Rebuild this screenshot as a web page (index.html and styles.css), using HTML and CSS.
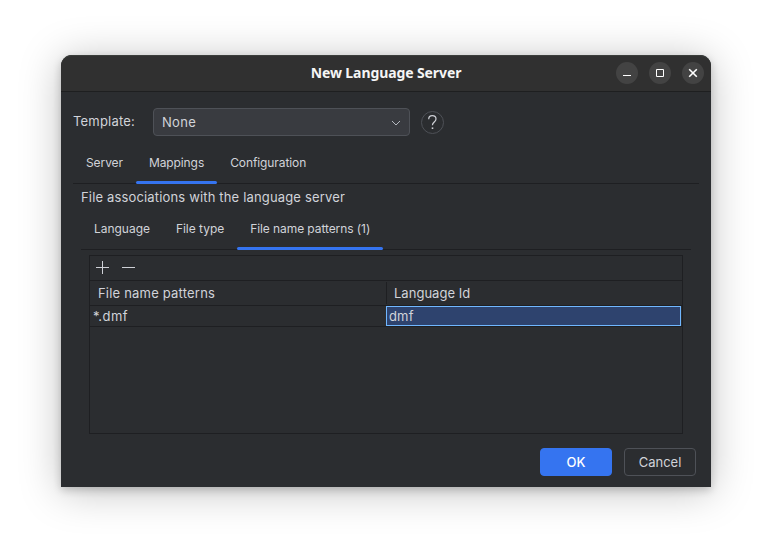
FILE: index.html
```html
<!DOCTYPE html>
<html lang="en">
<head>
<meta charset="utf-8">
<title>New Language Server</title>
<link rel="stylesheet" href="styles.css">
</head>
<body>
<div class="window">
  <header class="titlebar">
    <h1 class="title">New Language Server</h1>
    <div class="controls">
      <svg width="22" height="22" viewBox="0 0 22 22"><circle cx="11" cy="11" r="11"/><path d="M7 13.5h8"/></svg>
      <svg width="22" height="22" viewBox="0 0 22 22"><circle cx="11" cy="11" r="11"/><path d="M7.5 7.5h7v7h-7z"/></svg>
      <svg width="22" height="22" viewBox="0 0 22 22"><circle cx="11" cy="11" r="11"/><path class="close" d="M7.2 7.2l7.6 7.6M14.8 7.2l-7.6 7.6"/></svg>
    </div>
  </header>
  <main class="content">
    <div class="template-row">
      <label class="label"><span class="t-template">Template:</span></label>
      <div class="combo"><span class="t-none">None</span>
        <svg width="16" height="16" viewBox="0 0 16 16"><path d="M4 6l4 4 4-4"/></svg>
      </div>
      <svg class="help" width="23" height="23" viewBox="0 0 23 23"><circle cx="11.5" cy="11.5" r="11"/><path d="M7.7 8.2C7.7 5.9 9.2 4.6 11.3 4.6s3.7 1.3 3.7 3.4c0 2.9-3.6 3.1-3.6 6.2"/><path class="dot" d="M10.7 16.4h1.6v1.6h-1.6z"/></svg>
    </div>
    <nav class="tabs outer">
      <div class="tab"><span class="t-server">Server</span></div>
      <div class="tab active"><span class="t-mappings">Mappings</span></div>
      <div class="tab"><span class="t-config">Configuration</span></div>
    </nav>
    <section class="mappings">
      <p class="caption"><span class="t-caption">File associations with the language server</span></p>
      <nav class="tabs inner">
        <div class="tab"><span class="t-lang">Language</span></div>
        <div class="tab"><span class="t-type">File type</span></div>
        <div class="tab active"><span class="t-patterns">File name patterns (1)</span></div>
      </nav>
      <div class="panel">
        <div class="toolbar">
          <svg width="14" height="14" viewBox="0 0 14 14"><path d="M0 6.5h13M6.5 0v13"/></svg>
          <svg width="14" height="14" viewBox="0 0 14 14"><path d="M0 6.5h13"/></svg>
        </div>
        <div class="row head">
          <div class="cell"><span class="t-hpat">File name patterns</span></div>
          <div class="cell second"><span class="t-hid">Language Id</span></div>
        </div>
        <div class="row data">
          <div class="cell"><span class="t-star">*.dmf</span></div>
          <div class="cell selected"><span class="t-dmf">dmf</span></div>
        </div>
      </div>
    </section>
    <footer class="actions">
      <button class="button primary"><span class="t-ok">OK</span></button>
      <button class="button"><span class="t-cancel">Cancel</span></button>
    </footer>
  </main>
</div>
</body>
</html>
```
FILE: styles.css
```css
* { box-sizing: border-box; }
body {
  margin: 0;
  width: 772px;
  height: 554px;
  padding: 55px 61px 67px;
  overflow: hidden;
  background: #fff;
  font: 13px/16px Inter, "Liberation Sans", sans-serif;
  letter-spacing: .16px;
  color: #d1d3d9;
}
svg { display: block; flex: none; fill: none; }
span { white-space: nowrap; }
.window {
  width: 650px;
  height: 432px;
  border-radius: 11px 11px 0 0;
  background: #2b2d30;
  box-shadow: 0 3px 9px rgba(0, 0, 0, .2), 0 4px 42px rgba(0, 0, 0, .25);
}
.titlebar {
  display: grid;
  grid-template-columns: 1fr auto 1fr;
  align-items: center;
  height: 37px;
  padding-bottom: 1px;
  border-top: 1px solid #3b3e3b;
  border-bottom: 1px solid #1e1f20;
  border-radius: 11px 11px 0 0;
  background: #303030;
}
.title {
  grid-column: 2;
  margin: 0;
  font: bold 14px/20px "Noto Sans", sans-serif;
  letter-spacing: -.1px;
  color: #f5f5f5;
}
.controls { display: flex; justify-content: flex-end; gap: 11px; padding-right: 7px; }
.controls circle { fill: #434343; }
.controls path { stroke: #fff; }
.controls .close { stroke-width: 1.6; }
.content { padding: 16px 12px 0; }
.template-row { display: flex; height: 28px; }
.label { width: 80px; padding-top: 5px; }
.combo {
  display: flex;
  align-items: center;
  justify-content: space-between;
  width: 257px;
  padding: 0 5px 0 8px;
  border: 1px solid #4e5157;
  border-radius: 4px;
  background: #393b40;
}
.combo svg { margin-top: 2px; }
.combo path { stroke: #b4b8bf; }
.t-none { letter-spacing: .3px; }
.help { margin: 3px 0 0 11px; }
.help circle { stroke: #4e5157; }
.help path { stroke: #ced0d6; stroke-width: 1.2; }
.help .dot { fill: #ced0d6; stroke: none; }
.tabs { display: flex; font-size: 12px; letter-spacing: -.03px; border-bottom: 1px solid #1e1f22; }
.tab { display: flex; justify-content: center; margin-bottom: -1px; }
.active { position: relative; }
.active::after {
  content: "";
  position: absolute;
  inset: auto 0 0;
  height: 3px;
  border-radius: 1.5px;
  background: #3574f0;
}
.outer { height: 48px; letter-spacing: -.09px; }
.outer .tab { padding: 19px 13px 0; height: 48px; }
.mappings { padding: 0 8px; }
.caption { margin: 0; padding-top: 5px; height: 24px; }
.inner { height: 42px; margin-bottom: 5px; }
.inner .tab { padding: 13px 13px 0; height: 42px; }
.t-patterns { letter-spacing: -.08px; }
.panel { width: 594px; height: 179px; margin-left: 8px; border: 1px solid #1e1f22; }
.toolbar { display: flex; gap: 12px; height: 25px; padding: 5px 6px; border-bottom: 1px solid #1e1f22; }
.toolbar path { stroke: #ced0d6; }
.row { display: grid; grid-template-columns: 296px 295px; border-bottom: 1px solid #1e1f22; }
.head { height: 25px; }
.head .cell { padding: 4px 8px 0; }
.head .second { margin: 1px 0; padding: 3px 7px 0; border-left: 1px solid #1e1f22; }
.t-template, .t-hpat { letter-spacing: .2px; }
.t-hid { letter-spacing: .02px; }
.t-star { letter-spacing: .5px; }
.data { height: 21px; }
.data .cell { padding: 2px 3px 0; }
.data .selected { height: 20px; padding: 1px 2px 0; border: 1px solid #70b7ff; background: #2e436e; }
.actions { display: flex; justify-content: flex-end; gap: 12px; padding: 14px 3px 0 0; }
.button {
  width: 72px;
  height: 28px;
  padding: 0;
  border: 1px solid #4e5157;
  border-radius: 4px;
  background: transparent;
  color: inherit;
  font: inherit;
  letter-spacing: 0;
}
.primary { border-color: #3574f0; background: #3574f0; color: #fff; font-weight: 500; }
```
